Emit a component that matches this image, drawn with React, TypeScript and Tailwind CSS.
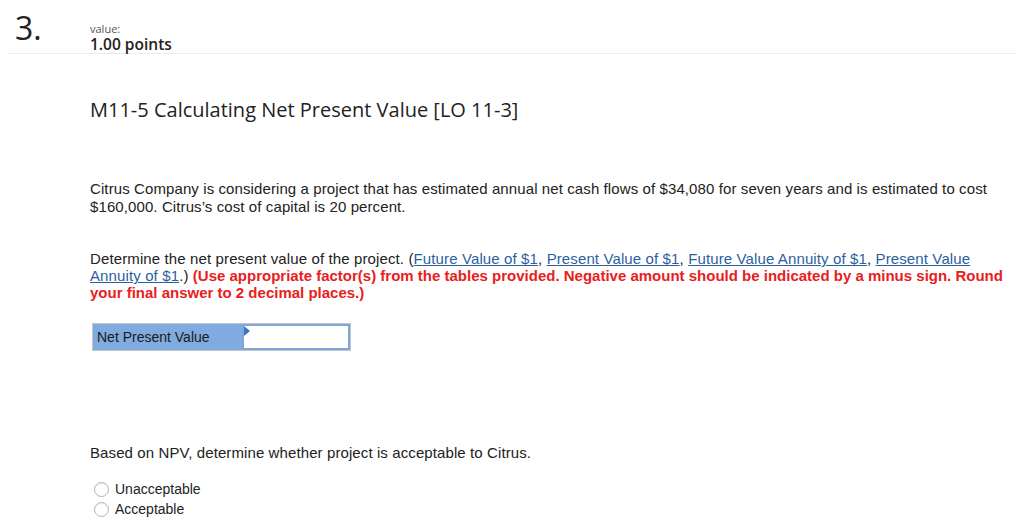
export default function App() {
  const heading = { fontFamily: '"Open Sans", "Lato", sans-serif' };
  const body = { fontFamily: '"Liberation Sans", Arial, sans-serif' };

  return (
    <div className="w-[1024px] h-[531px] bg-white overflow-hidden text-[#333]">
      <div className="mx-2 flex items-start border-b border-[#ececec] h-[54px]" style={heading}>
        <div className="w-[82px] pl-[7px] pt-[10px] text-[32px] leading-[36px] text-[#222]">3.</div>
        <div className="pt-[23px]">
          <div className="text-[11px] leading-[12px] text-[#555]">value:</div>
          <div className="text-[15.5px] leading-[19px] font-semibold text-[#222]">1.00 points</div>
        </div>
      </div>

      <div className="pl-[90px] pr-[2px]">
        <h2 className="mt-[43px] text-[20px] leading-[26px] text-[#222]" style={heading}>
          M11-5 Calculating Net Present Value [LO 11-3]
        </h2>

        <div style={body} className="text-[15px]">
          <p className="mt-[57px] leading-[18px] text-[#222] tracking-[0.1px] pr-[20px]">
            Citrus Company is considering a project that has estimated annual net cash flows of $34,080 for seven years and is estimated to cost $160,000. Citrus’s cost of capital is 20 percent.
          </p>

          <p className="mt-[34px] leading-[17px] text-[#222]">
            <span className="tracking-[0.12px]">
              Determine the net present value of the project. (
              <a className="text-[#2d5f9e] underline">Future Value of $1</a>,{" "}
              <a className="text-[#2d5f9e] underline">Present Value of $1</a>,{" "}
              <a className="text-[#2d5f9e] underline">Future Value Annuity of $1</a>,{" "}
              <a className="text-[#2d5f9e] underline">Present Value Annuity of $1</a>.){" "}
            </span>
            <span className="font-bold text-[#e8201d]">
              (Use appropriate factor(s) from the tables provided. Negative amount should be indicated by a minus sign. Round your final answer to 2 decimal places.)
            </span>
          </p>

          <div className="mt-[22px] ml-[2px] inline-flex border border-[#c4c4c4] w-[259px] h-[28px] align-top">
            <div className="w-[149px] bg-[#80abe0] flex items-center pl-[4px] text-[14px] text-[#1a1a1a]">
              Net Present Value
            </div>
            <div className="relative flex-1 bg-white border-2 border-[#7fa6d8]">
              <div className="absolute left-0 top-0 w-0 h-0 border-t-[5px] border-b-[5px] border-l-[6px] border-t-transparent border-b-transparent border-l-[#3c72c4]" />
            </div>
          </div>

          <p className="mt-[93px] leading-[18px] text-[#222] tracking-[0.1px]">
            Based on NPV, determine whether project is acceptable to Citrus.
          </p>

          <div className="mt-[19px] flex flex-col gap-[3px] text-[14px] text-[#222]">
            {["Unacceptable", "Acceptable"].map((label) => (
              <label key={label} className="flex items-center gap-[6px] leading-[17px]">
                <span className="w-[15px] h-[15px] rounded-full border border-[#b5b5b5] bg-white shadow-[inset_0_1px_1px_rgba(0,0,0,0.08)] ml-[4px]" />
                {label}
              </label>
            ))}
          </div>
        </div>
      </div>
    </div>
  );
}
